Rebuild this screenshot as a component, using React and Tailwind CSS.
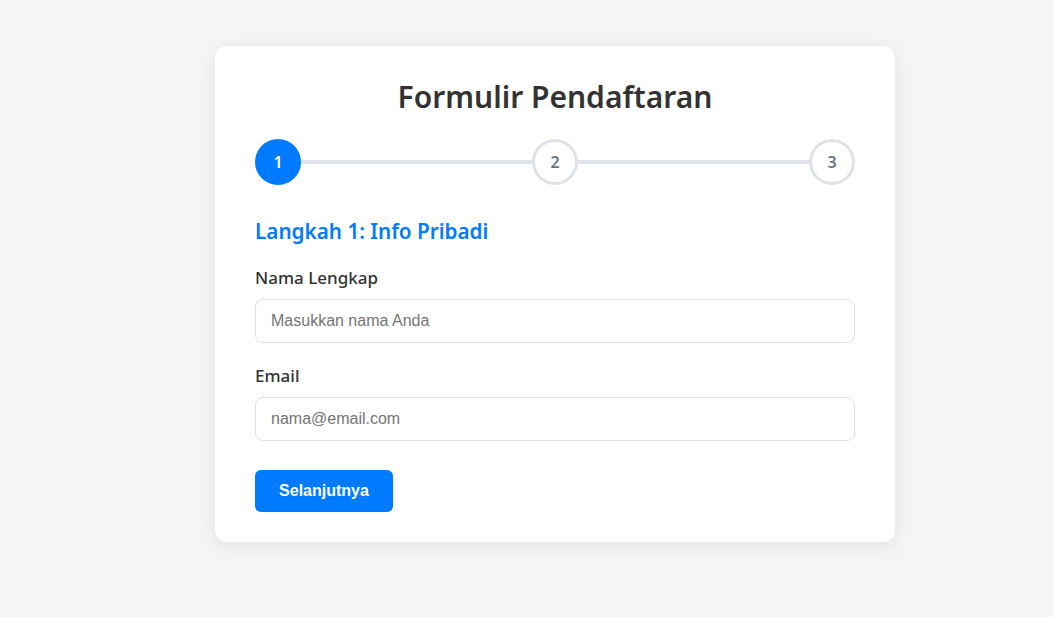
import React from "react";

const StepCircle = ({ number, active }) => (
	<div
		className={`w-[46px] h-[46px] shrink-0 rounded-full flex items-center justify-center text-[16px] font-semibold border-[3px] ${
			active
				? "bg-[#007bff] border-[#007bff] text-white"
				: "bg-white border-[#dee2e6] text-[#6c757d]"
		}`}
	>
		{number}
	</div>
);

const Field = ({ label, type, placeholder }) => (
	<div className="mb-[21px]">
		<label className="block text-[17px] font-medium text-[#333] mb-[9px] leading-[24px]">
			{label}
		</label>
		<input
			type={type}
			placeholder={placeholder}
			className="w-full h-[44px] px-[15px] rounded-[8px] border border-[#dde0e4] bg-white text-[16px] text-[#333] placeholder:text-[#757575] outline-none"
			style={{ fontFamily: "'Liberation Sans', Arial, sans-serif" }}
		/>
	</div>
);

export default function App() {
	return (
		<div
			className="min-h-screen bg-[#f4f5f5] pt-[46px] pl-[215px]"
			style={{ fontFamily: "'Noto Sans', 'Open Sans', sans-serif" }}
		>
			<div className="w-[680px] bg-white rounded-[12px] shadow-[0_4px_20px_rgba(0,0,0,0.08)] px-[40px] pt-[31px] pb-[30px]">
				<h1 className="text-center text-[30px] font-semibold text-[#333] leading-[40px]">
					Formulir Pendaftaran
				</h1>

				<div className="flex items-center mt-[22px]">
					<StepCircle number="1" active />
					<div className="flex-1 h-[4px] bg-[#e0e3e8]" />
					<StepCircle number="2" />
					<div className="flex-1 h-[4px] bg-[#e0e3e8]" />
					<StepCircle number="3" />
				</div>

				<h2 className="mt-[32px] mb-[21px] text-[20.7px] font-semibold text-[#007bff] leading-[28px]">
					Langkah 1: Info Pribadi
				</h2>

				<Field label="Nama Lengkap" type="text" placeholder="Masukkan nama Anda" />
				<Field label="Email" type="email" placeholder="nama@email.com" />

				<button
					className="w-[138px] h-[42px] rounded-[6px] bg-[#007bff] text-white text-[16px] font-bold mt-[29px] block"
					style={{ fontFamily: "'Liberation Sans', Arial, sans-serif" }}
				>
					Selanjutnya
				</button>
			</div>
		</div>
	);
}
